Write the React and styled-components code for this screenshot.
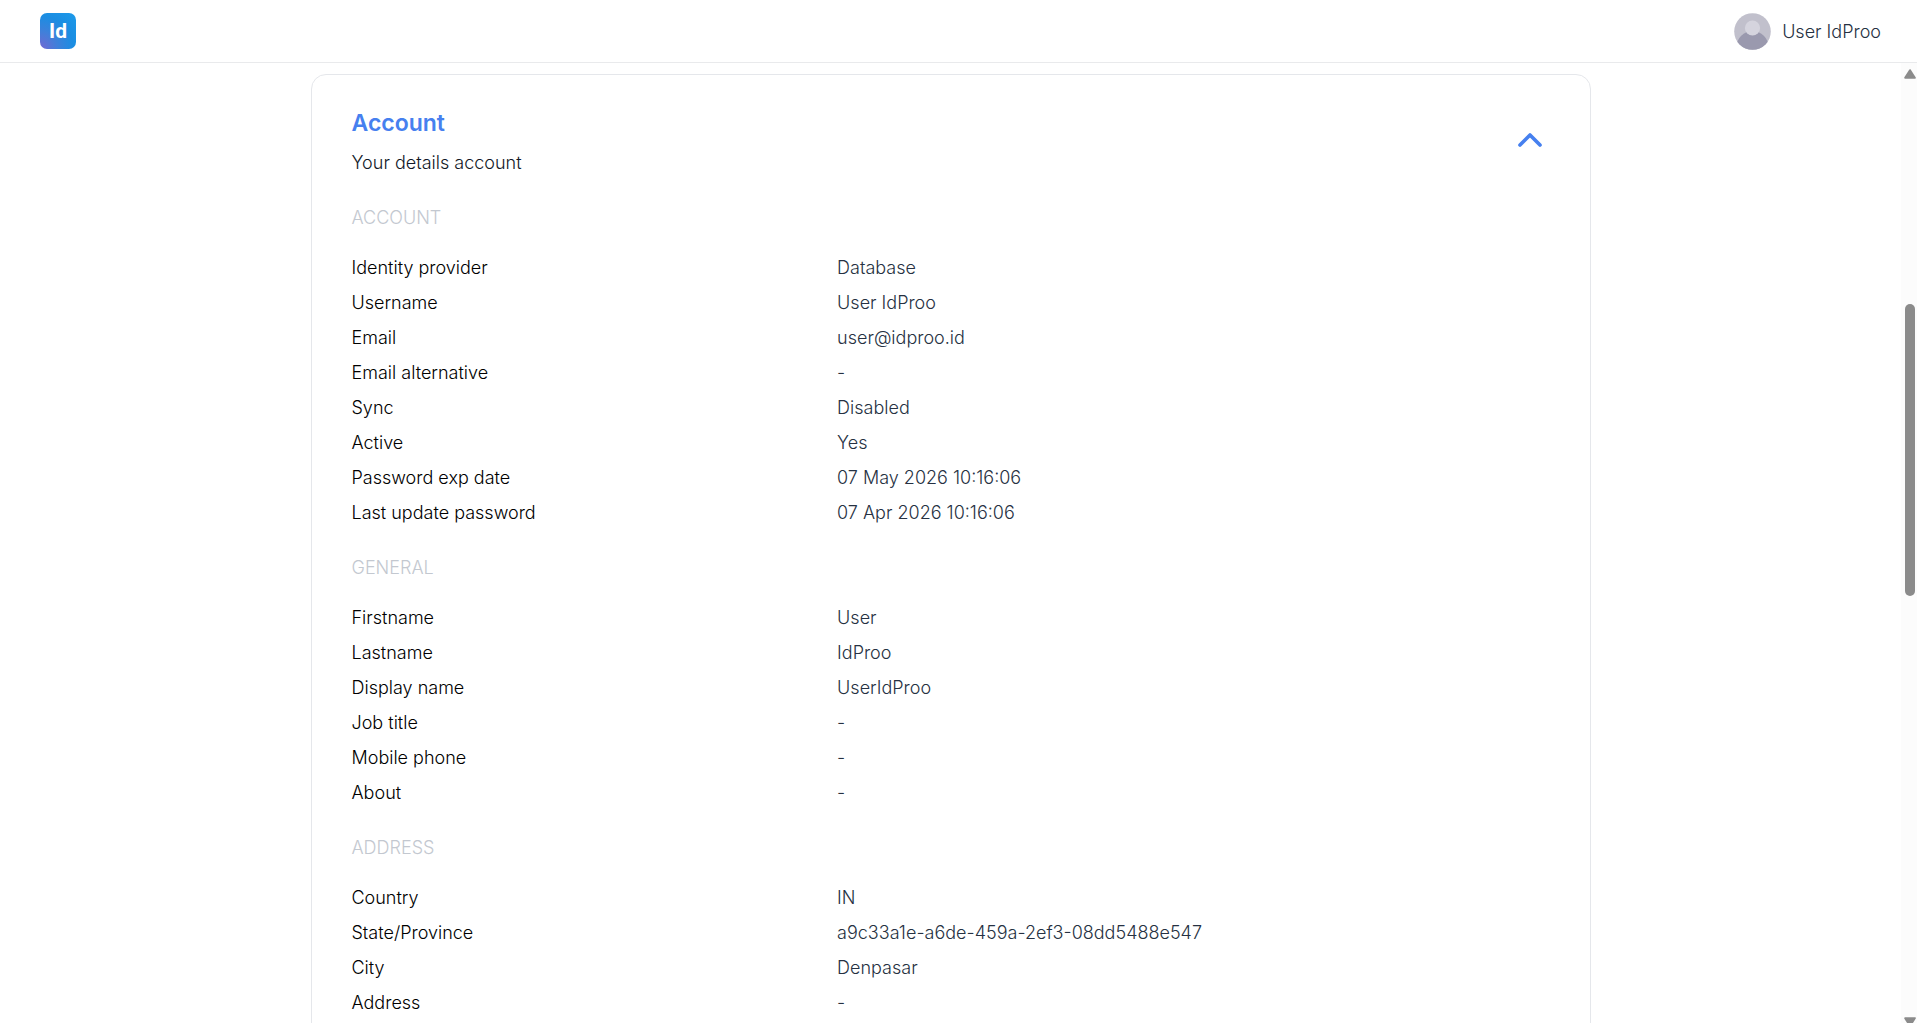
import { useState } from "react";
import styled, { createGlobalStyle } from "styled-components";
import { ChevronUp, ChevronDown } from "lucide-react";

const sections = [
    {
        title: "ACCOUNT",
        rows: [
            ["Identity provider", "Database"],
            ["Username", "User IdProo"],
            ["Email", "user@idproo.id"],
            ["Email alternative", "-"],
            ["Sync", "Disabled"],
            ["Active", "Yes"],
            ["Password exp date", "07 May 2026 10:16:06"],
            ["Last update password", "07 Apr 2026 10:16:06"],
        ],
    },
    {
        title: "GENERAL",
        rows: [
            ["Firstname", "User"],
            ["Lastname", "IdProo"],
            ["Display name", "UserIdProo"],
            ["Job title", "-"],
            ["Mobile phone", "-"],
            ["About", "-"],
        ],
    },
    {
        title: "ADDRESS",
        rows: [
            ["Country", "IN"],
            ["State/Province", "a9c33a1e-a6de-459a-2ef3-08dd5488e547"],
            ["City", "Denpasar"],
            ["Address", "-"],
        ],
    },
];

export default function App() {
    return (
        <Page>
            <GlobalStyle />
            <Navbar />
            <Body>
                <Content>
                    <AccountCard />
                </Content>
                <Scrollbar />
            </Body>
        </Page>
    );
}

function Navbar() {
    return (
        <Header>
            <Logo href="#">Id</Logo>
            <UserButton type="button">
                <Avatar />
                User IdProo
            </UserButton>
        </Header>
    );
}

function Avatar() {
    return (
        <svg width="37" height="37" viewBox="0 0 37 37" aria-hidden="true">
            <defs>
                <clipPath id="avatar">
                    <circle cx="18.5" cy="18.5" r="18.3" />
                </clipPath>
            </defs>
            <g clipPath="url(#avatar)">
                <rect width="37" height="37" fill="#c1c0cc" />
                <circle cx="18.5" cy="34" r="16" fill="#9a99ae" />
                <circle cx="18.5" cy="15" r="7.6" fill="#d5d4de" />
            </g>
        </svg>
    );
}

function AccountCard() {
    const [isOpen, setIsOpen] = useState(true);

    return (
        <Card>
            <CardHeader>
                <div>
                    <Title>Account</Title>
                    <Subtitle>Your details account</Subtitle>
                </div>
                <Toggle
                    type="button"
                    aria-label="Toggle account details"
                    aria-expanded={isOpen}
                    onClick={() => setIsOpen(!isOpen)}
                >
                    {isOpen ? (
                        <ChevronUp size={40} strokeWidth={2.2} />
                    ) : (
                        <ChevronDown size={40} strokeWidth={2.2} />
                    )}
                </Toggle>
            </CardHeader>
            {isOpen && sections.map((section) => (
                <section key={section.title}>
                    <SectionTitle>{section.title}</SectionTitle>
                    <Details>
                        {section.rows.map(([label, value]) => (
                            <Row key={label}>
                                <Label>{label}</Label>
                                <Value>{value}</Value>
                            </Row>
                        ))}
                    </Details>
                </section>
            ))}
        </Card>
    );
}

function Scrollbar() {
    return (
        <Track aria-hidden="true">
            <Arrow viewBox="0 0 12 10">
                <path d="M6 1.2 L10.8 8.8 H1.2 Z" />
            </Arrow>
            <Space $grow={225} />
            <Thumb />
            <Space $grow={421} />
            <Arrow viewBox="0 0 12 10">
                <path d="M6 8.8 L10.8 1.2 H1.2 Z" />
            </Arrow>
        </Track>
    );
}

const GlobalStyle = createGlobalStyle`
    * {
        box-sizing: border-box;
        margin: 0;
    }

    body {
        background-color: #fff;
        font-family: Inter, sans-serif;
        font-size: 18px;
        font-weight: 300;
        line-height: 25px;
        color: #111827;
    }

    button {
        padding: 0;
        border: none;
        background: none;
        font: inherit;
        cursor: pointer;
    }
`;

const Page = styled.div`
    display: flex;
    flex-direction: column;
    height: 100vh;
    overflow: hidden;
`;

const Header = styled.header`
    display: flex;
    justify-content: space-between;
    align-items: center;
    flex-shrink: 0;
    height: 63px;
    padding: 0 36px 0 40px;
    border-bottom: 1px solid #e9eaec;
`;

const Logo = styled.a`
    display: flex;
    align-items: center;
    justify-content: center;
    width: 36px;
    height: 36px;
    border-radius: 7px;
    background: radial-gradient(circle at 0% 100%, #7468d2 0%, #3f80da 35%, #1b8de2 65%, #1c9bea 100%);
    font-family: Roboto, sans-serif;
    font-size: 21px;
    font-weight: 700;
    color: #fff;
    text-decoration: none;
`;

const UserButton = styled.button`
    display: flex;
    align-items: center;
    gap: 11px;
    color: #263142;
`;

const Body = styled.div`
    display: flex;
    flex: 1;
    min-height: 0;
`;

const Content = styled.main`
    flex: 1;
    padding: 11px 40px;
    overflow: hidden;
`;

const Card = styled.article`
    max-width: 1280px;
    margin: 0 auto;
    padding: 30px 40px;
    border: 1px solid #e5e7eb;
    border-radius: 15px;
`;

const CardHeader = styled.div`
    display: flex;
    justify-content: space-between;
    align-items: center;
`;

const Title = styled.h2`
    margin-bottom: 8px;
    font-size: 23px;
    font-weight: 600;
    line-height: 37px;
    color: #4680ef;
`;

const Subtitle = styled.p`
    color: #111827;
`;

const Toggle = styled.button`
    display: flex;
    color: #4680ef;
`;

const SectionTitle = styled.h3`
    margin: 30px 0 25px;
    font-size: 18px;
    font-weight: 300;
    color: #c3c8d0;
`;

const Details = styled.dl`
    display: flex;
    flex-direction: column;
    gap: 10px;
`;

const Row = styled.div`
    display: grid;
    grid-template-columns: repeat(5, 1fr);
    column-gap: 16px;
`;

const Label = styled.dt`
    grid-column: span 2;
    color: #000;
`;

const Value = styled.dd`
    grid-column: span 3;
    color: #263142;
`;

/* the lower arrow is partly below the window edge */
const Track = styled.div`
    display: flex;
    flex-direction: column;
    align-items: center;
    flex-shrink: 0;
    width: 16px;
    margin-bottom: -4px;
    padding: 6px 0 0 2px;
    background-color: #fcfcfc;
`;

const Arrow = styled.svg`
    flex-shrink: 0;
    width: 12px;
    height: 10px;
    fill: #8b8b8b;
    stroke: #8b8b8b;
    stroke-width: 2;
    stroke-linejoin: round;
`;

const Space = styled.div`
    flex: ${({ $grow }) => $grow} 0 0;
`;

const Thumb = styled.div`
    flex: 292 0 0;
    width: 10px;
    border-radius: 5px;
    background-color: #8b8b8b;
`;
